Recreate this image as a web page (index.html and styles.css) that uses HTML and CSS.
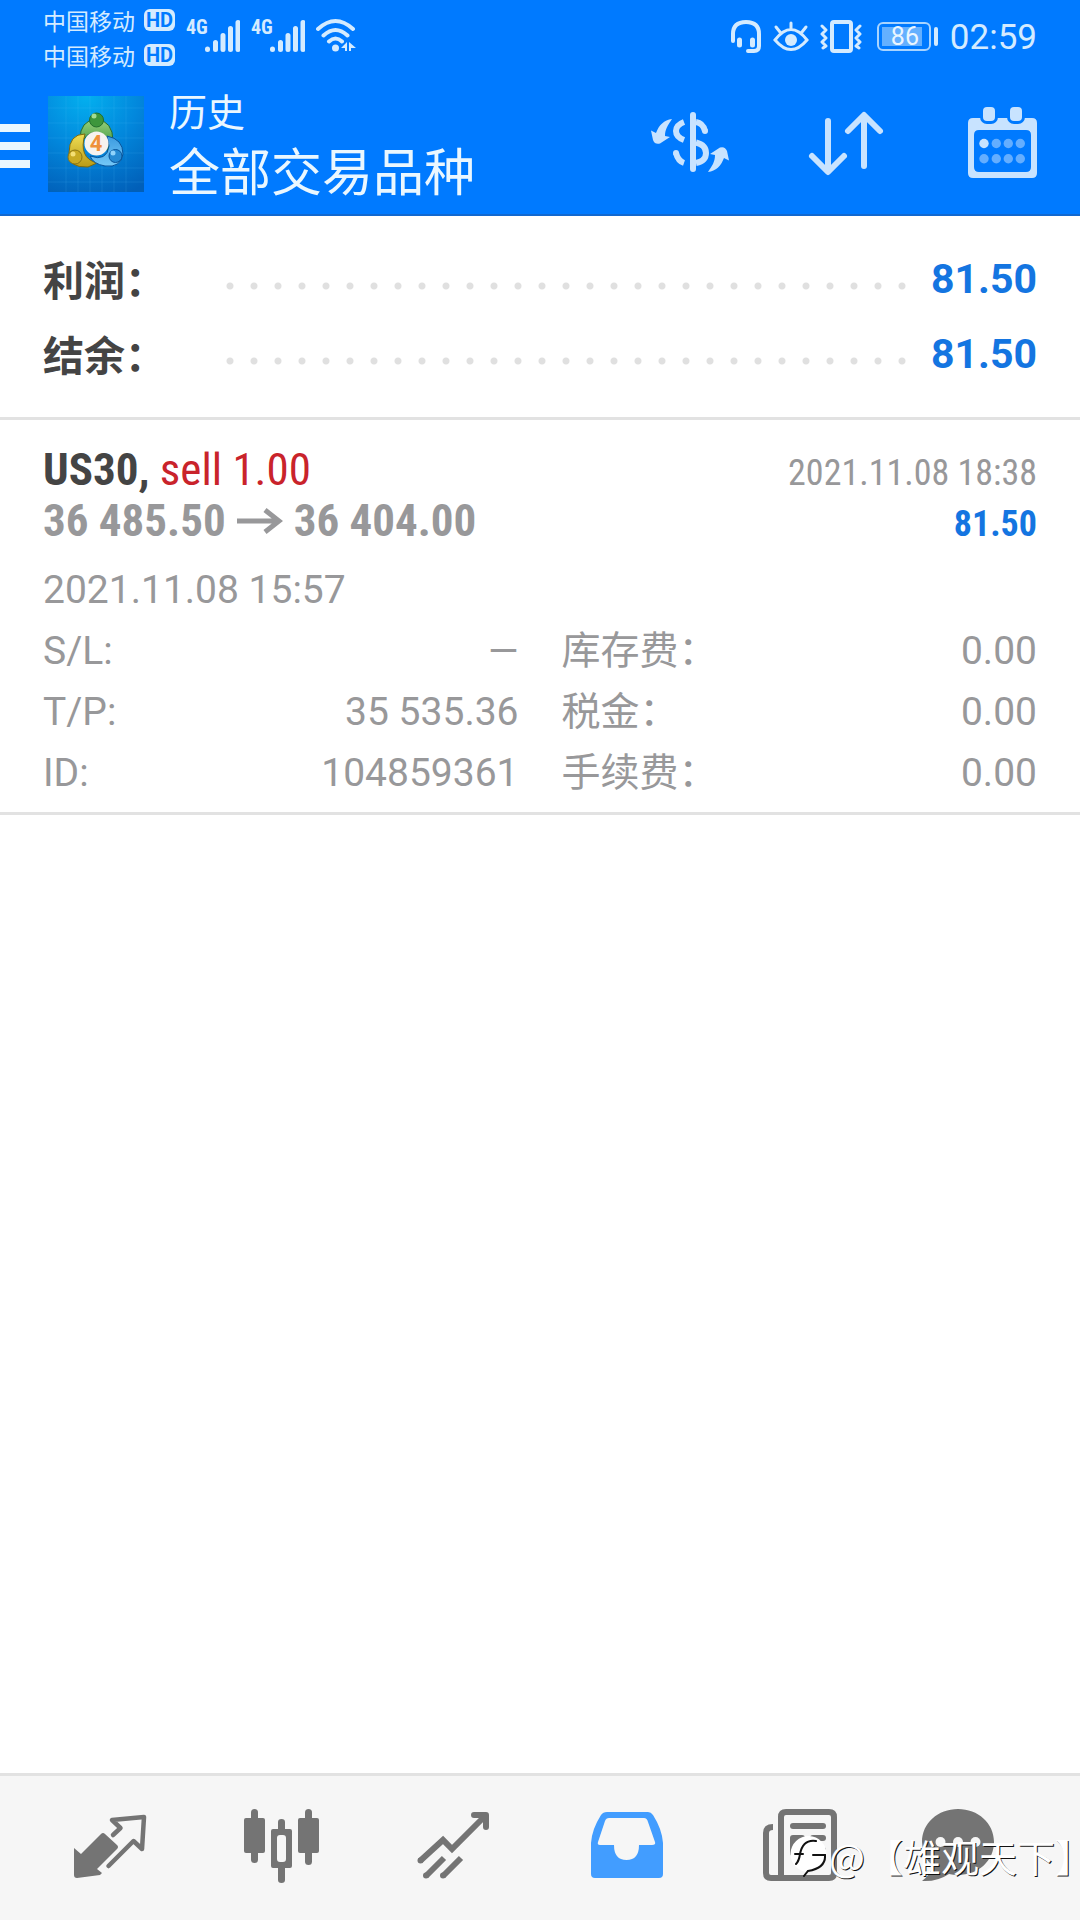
FILE: index.html
```html
<!DOCTYPE html>
<html lang="zh-CN">
<head>
<meta charset="utf-8">
<meta name="viewport" content="width=device-width, initial-scale=1">
<title>历史</title>
<link rel="stylesheet" href="styles.css">
</head>
<body>
<header class="top">
  <div class="status">
    <div class="carriers">
      <div class="carrier">中国移动<span class="hd">HD</span></div>
      <div class="carrier">中国移动<span class="hd">HD</span></div>
    </div>
    <div class="signals">
      <div class="signal"><span class="net">4G</span><svg width="36" height="36" viewBox="0 0 36 36" stroke="currentColor" stroke-width="5" stroke-linecap="round"><path d="M3.500 32.500v-.5M11.500 32.500v-7M19 32.500v-14M26.500 32.500v-21M34 32.500v-27"/></svg></div>
      <div class="signal"><span class="net">4G</span><svg width="36" height="36" viewBox="0 0 36 36" stroke="currentColor" stroke-width="5" stroke-linecap="round"><path d="M3.500 32.500v-.5M11.500 32.500v-7M19 32.500v-14M26.500 32.500v-21M34 32.500v-27"/></svg></div>
      <svg width="40" height="36" viewBox="0 0 40 36" fill="none" stroke="currentColor" stroke-width="4" stroke-linecap="round"><path d="M2 12Q19.500-4 37 12M7.500 18.500Q19.500 7.500 31.500 18.500M13 24.500Q19.500 18.500 26 24.500"/><circle cx="19.500" cy="31" r="3.500" fill="currentColor" stroke="none"/><path fill="currentColor" stroke="none" d="M31 25v9h-2v-3h-4zM33 25v9h2v-3h5z"/></svg>
    </div>
    <div class="indicators">
      <svg width="32" height="36" viewBox="0 0 32 36" fill="none" stroke="currentColor" stroke-width="4" stroke-linecap="round"><path d="M3 24V17Q3 5 16 5T29 17V29Q29 34 24 34H18"/><path stroke-width="5" d="M9.500 23v5M22.500 23v5"/></svg>
      <svg width="36" height="36" viewBox="0 0 36 36" fill="none" stroke="currentColor" stroke-width="3" stroke-linecap="round"><path d="M2 23Q18 2 34 23Q18 42 2 23ZM18 12V6M7 15L3 10M29 15l4-5"/><circle cx="18" cy="23" r="6" fill="currentColor" stroke="none"/></svg>
      <svg width="42" height="36" viewBox="0 0 42 36" fill="none" stroke="currentColor" stroke-width="4" stroke-linejoin="round" stroke-linecap="round"><rect x="12" y="5" width="19" height="29" rx="2"/><path stroke-width="3" d="M2 9l4 4-4 4 4 4-4 4 4 4-3 2M40 9l-4 4 4 4-4 4 4 4-4 4 3 2"/></svg>
      <span class="battery"><span class="level">86</span></span>
      <time class="clock">02:59</time>
    </div>
  </div>
  <div class="toolbar">
    <button class="menu" aria-label="菜单"><svg width="30" height="96" viewBox="0 0 30 96" fill="currentColor"><path d="M0 28h30v8H0zM0 46h30v8H0zM0 64h30v8H0z"/></svg></button>
    <svg class="logo" width="96" height="96" viewBox="0 0 96 96">
      <defs>
        <radialGradient id="bg" cx=".4" cy="0" r="1.100"><stop offset="0" stop-color="#03b0ef"/><stop offset=".5" stop-color="#0287dc"/><stop offset="1" stop-color="#015fb8"/></radialGradient>
        <linearGradient id="g" x1="0" y1="0" x2="0" y2="1"><stop offset="0" stop-color="#9ad27c"/><stop offset="1" stop-color="#2d8b35"/></linearGradient>
        <linearGradient id="y" x1="0" y1="0" x2="0" y2="1"><stop offset="0" stop-color="#f0de54"/><stop offset="1" stop-color="#b99a16"/></linearGradient>
        <linearGradient id="b" x1="0" y1="0" x2="0" y2="1"><stop offset="0" stop-color="#3b9be0"/><stop offset="1" stop-color="#75c8f7"/></linearGradient>
      </defs>
      <rect width="96" height="96" fill="url(#bg)"/>
      <path d="M18 0v96M30 0v96M42 0v96M54 0v96M66 0v96M78 0v96M0 12h96M0 27h96M0 42h96M0 57h96M0 72h96M0 86h96" stroke="#6cc8ff" stroke-opacity=".14"/>
      <g stroke-width="1">
        <path d="M32 43Q32 25 48 23Q65 25 65 45L60 56Q48 26 36 43Z" fill="url(#g)" stroke="#246b31"/>
        <path d="M37 38Q21 38 21 57Q20 72 40 71L49 67Q30 62 37 38Z" fill="url(#y)" stroke="#786910"/>
        <path d="M59 40Q75 43 75 58Q73 72 57 70Q45 68 42 60Q59 66 61 50Z" fill="url(#b)" stroke="#07539a"/>
        <circle cx="48.500" cy="24" r="7" fill="#3d963c" stroke="#226e2c"/>
        <circle cx="27" cy="61" r="7" fill="#c8aa23" stroke="#8a7514"/>
        <circle cx="67.500" cy="60" r="6.500" fill="#258ad3" stroke="#07539a"/>
      </g>
      <circle cx="46" cy="20" r="2.500" fill="#a4dc91"/><circle cx="25" cy="58" r="2.500" fill="#f4df75"/><circle cx="65" cy="57" r="2.500" fill="#8fd3fb"/>
      <circle cx="48.500" cy="47.500" r="12" fill="#f6f3ef"/>
      <text class="logo-num" x="48" y="55" text-anchor="middle">4</text>
    </svg>
    <div class="titles">
      <div class="section">历史</div>
      <h1 class="title">全部交易品种</h1>
    </div>
    <div class="actions">
      <button aria-label="货币"><svg width="96" height="96" viewBox="0 0 96 96" fill="none" stroke="currentColor" stroke-width="6"><path stroke-linecap="round" d="M51 19V73"/><path d="M42 26Q34 29 34 35T42 44M42 67Q36 65 34 57M54 26Q61 27 63 35M54 46.500Q64 49 64 57T54 67"/><g fill="currentColor" stroke="none"><circle cx="34" cy="57" r="3"/><circle cx="63" cy="35" r="3"/><path id="swap" d="M30 23C22 24 17 29 14 37L9 34.500L11 44Q13 49 18 47.500L28 41L23 40C23 33 26 29 30 23Z"/><use href="#swap" transform="rotate(180 48 49.500)"/></g></svg></button>
      <button aria-label="排序"><svg width="96" height="96" viewBox="0 0 96 96" fill="none" stroke="currentColor" stroke-width="6" stroke-linecap="round" stroke-linejoin="round"><path d="M30 25V75M14 60L30 76L46 60M66 70V20M50 35L66 19L82 35"/></svg></button>
      <button aria-label="日期"><svg width="96" height="96" viewBox="0 0 96 96" fill="currentColor"><path fill-rule="evenodd" d="M19 22H78Q83 22 83 27V77Q83 82 78 82H19Q14 82 14 77V27Q14 22 19 22ZM25 34Q20 34 20 39V71Q20 76 25 76H72Q77 76 77 71V39Q77 34 72 34Z"/><g stroke="#007aff" stroke-width="6" paint-order="stroke"><rect x="29" y="11" width="12" height="14" rx="4"/><rect x="56" y="11" width="12" height="14" rx="4"/></g><circle cx="30" cy="47.500" r="4.700"/><g opacity=".5"><circle cx="42.300" cy="47.500" r="4.700"/><circle cx="54.300" cy="47.500" r="4.700"/><circle cx="66.300" cy="47.500" r="4.700"/><circle cx="30" cy="62.700" r="4.700"/><circle cx="42.300" cy="62.700" r="4.700"/><circle cx="54.300" cy="62.700" r="4.700"/><circle cx="66.300" cy="62.700" r="4.700"/></g></svg></button>
    </div>
  </div>
</header>

<main class="content">
  <dl class="summary">
    <div class="sum-row"><dt>利润：</dt><dd>81.50</dd></div>
    <div class="sum-row"><dt>结余：</dt><dd>81.50</dd></div>
  </dl>
  <article class="deal">
    <div class="deal-row head">
      <div class="symbol"><b>US30,</b> <span class="sell">sell 1.00</span></div>
      <time class="closed">2021.11.08 18:38</time>
    </div>
    <div class="deal-row head prices">
      <div class="price">36 485.50 <svg width="46" height="28" viewBox="0 0 46 28" fill="none" stroke="currentColor" stroke-width="5"><path d="M0 14H43M28 3L42 14L28 25"/></svg> 36 404.00</div>
      <div class="profit">81.50</div>
    </div>
    <time class="opened">2021.11.08 15:57</time>
    <div class="details">
      <dl class="col">
        <div><dt>S/L:</dt><dd>—</dd></div>
        <div><dt>T/P:</dt><dd>35 535.36</dd></div>
        <div><dt>ID:</dt><dd>104859361</dd></div>
      </dl>
      <dl class="col">
        <div><dt>库存费：</dt><dd>0.00</dd></div>
        <div><dt>税金：</dt><dd>0.00</dd></div>
        <div><dt>手续费：</dt><dd>0.00</dd></div>
      </dl>
    </div>
  </article>
</main>

<nav class="tabs">
  <a href="#quotes" aria-label="行情"><svg width="96" height="96" viewBox="0 0 96 96"><path fill="currentColor" d="M12 48L19 54L39 34Q41 32 43 34L55 45Q57 47 55 49L35 69L40 73L38 75L15 78Q12 78 12 75Z"/><path fill="none" stroke="currentColor" stroke-width="4.500" stroke-linecap="round" stroke-linejoin="round" d="M51 35L58.500 28L50 20L82 17L80 49L71.500 41L46.500 66"/></svg></a>
  <a href="#charts" aria-label="图表"><svg width="96" height="96" viewBox="0 0 96 96" fill="currentColor"><rect x="10" y="18" width="21" height="35" rx="2"/><rect x="17" y="9" width="7" height="54" rx="3.500"/><path fill-rule="evenodd" d="M39 29H56Q58 29 58 31V66Q58 68 56 68H39Q37 68 37 66V31Q37 29 39 29ZM46 35Q43 35 43 38V59Q43 62 46 62H49Q52 62 52 59V38Q52 35 49 35Z"/><path d="M44 29V22Q44 19 47.500 19T51 22V29ZM44 68V80Q44 83 47.500 83T51 80V68Z"/><rect x="64" y="18" width="21" height="35" rx="2"/><rect x="71" y="9" width="7" height="56" rx="3.500"/></svg></a>
  <a href="#trade" aria-label="交易"><svg width="96" height="96" viewBox="0 0 96 96" fill="none" stroke="currentColor" stroke-width="6"><path d="M14 61L37 40L46 49L80 15M20 76L38 58M37 76L55 58"/><path stroke-linejoin="round" stroke-linecap="round" d="M68 15H80V27"/><g fill="currentColor" stroke="none"><circle cx="14.500" cy="60.500" r="3"/><circle cx="20" cy="75.500" r="3"/><circle cx="37" cy="75.500" r="3"/></g></svg></a>
  <a href="#history" class="active" aria-label="历史" aria-current="page"><svg width="96" height="96" viewBox="0 0 96 96" fill="currentColor"><path fill-rule="evenodd" d="M29 12H70Q73 12 75 15Q84 29 85 43V74Q85 78 81 78H17Q13 78 13 74V43Q14 29 23 15Q25 12 29 12ZM31 18Q28 18 27 21L20 42Q19 45 22 45H36Q36 60 48.500 60T61 45H74Q78 45 77 42L70 22Q69 18 66 18Z"/></svg></a>
  <a href="#news" aria-label="新闻"><svg width="96" height="96" viewBox="0 0 96 96"><path fill="none" stroke="currentColor" stroke-width="6" d="M23 27Q16 27 16 33V73Q16 78 21 78H79Q84 78 84 73V17Q84 12 79 12H36Q31 12 31 17V78"/><g fill="currentColor"><rect x="40" y="23" width="36" height="6" rx="3"/><rect x="40" y="35" width="15" height="21" rx="3"/><rect x="60" y="35" width="16" height="6" rx="3"/><rect x="60" y="47" width="16" height="6" rx="3"/></g></svg></a>
  <a href="#mail" aria-label="信箱"><svg width="96" height="96" viewBox="0 0 96 96"><path fill="currentColor" d="M36 9C56 9 72 23 72 42S56 75 36 75Q31 75 27 74Q15 82 0 81Q8 75 11 66Q0 57 0 42C0 23 16 9 36 9Z"/><g fill="#f6f6f6"><circle cx="18.500" cy="42" r="5"/><circle cx="36" cy="42" r="5"/><circle cx="53.500" cy="42" r="5"/></g></svg></a>
  <div class="watermark"><svg width="40" height="42" viewBox="0 0 40 42"><path fill="#fff" d="M20 1A18 18 0 1 1 19 37A18 18 0 1 1 20 1Z"/><path fill="none" stroke="#111" stroke-width="2" stroke-linecap="round" d="M7 29Q10 26 11 19Q14 4 27 6M6 19H14M24 20H36Q37 33 19 36L15 41"/></svg><span>@【雄观天下<span class="half">】</span></span></div>
</nav>
</body>
</html>
```
FILE: styles.css
```css
* { box-sizing: border-box; }
body {
  margin: 0;
  min-height: 100vh;
  display: flex;
  flex-direction: column;
  background: #fff;
  font-family: Roboto, "Noto Sans CJK SC", sans-serif;
  color: #444;
}
svg { display: block; flex: none; }
dl, dd, h1 { margin: 0; }
button { padding: 0; border: 0; background: none; color: inherit; font: inherit; }

/* Header */
.top { background: #007aff; color: #d4ebff; border-bottom: 2px solid #1268cf; }
.status { display: flex; height: 80px; padding: 2px 43px 0; }
.carrier { display: flex; align-items: center; gap: 9px; height: 35px; font-size: 23px; }
.hd {
  width: 31px; height: 22px; border-radius: 6px;
  background: #d4ebff; color: #007aff;
  font-size: 20px; font-weight: 700; line-height: 22px; text-align: center;
}
.signals { display: flex; gap: 11px; margin-left: 11px; padding-top: 15px; }
.signal { display: flex; }
.net { width: 18px; font: 700 20px/20px "Roboto Condensed", sans-serif; }
.indicators { display: flex; gap: 11px; margin-left: auto; padding-top: 15px; }
.battery {
  position: relative;
  width: 54px; height: 29px; margin: 5px 8px 0 4px; padding: 3px;
  border: 2px solid #a8d4ff; border-radius: 6px;
}
.battery::after {
  content: ""; position: absolute; right: -9px; top: 3px;
  width: 4px; height: 19px; border-radius: 2px; background: #d4ebff;
}
.level {
  display: block; width: 40px; height: 19px; padding-left: 9px;
  background: #64b0ff; font-size: 25px; line-height: 20px; color: #eaf6ff;
}
.clock { font-size: 35px; line-height: 42px; }

.toolbar { display: flex; align-items: flex-start; padding: 16px 30px 22px 0; color: #eaf7ff; }
.menu { margin-right: 18px; }
.logo-num { font: 700 22px Roboto, sans-serif; fill: #ef9139; }
.titles { margin: -6px 0 -22px 25px; }
.section { font-size: 38px; line-height: 46px; }
.title { font-size: 51px; line-height: 76px; font-weight: 400; }
.actions { display: flex; gap: 60px; margin-left: auto; color: #c8e3ff; }

/* Totals */
.content { flex: 1; }
.summary { padding: 24px 43px 27px; border-bottom: 3px solid #e2e2e2; }
.sum-row { display: flex; align-items: center; height: 75px; font-size: 41px; font-weight: 700; }
.sum-row dt { width: 175px; }
.sum-row dd { flex: 1; display: flex; align-items: center; padding-top: 3px; color: #1475e1; }
.sum-row dd::before {
  content: ""; flex: 1; height: 8px; margin: 14px 17px 0 0;
  background: radial-gradient(circle, #e0e0e0 3px, transparent 4px) 0 0 / 24px 8px;
}

/* Deal */
.deal { padding: 24px 43px 8px; border-bottom: 3px solid #e2e2e2; color: #98989a; font-size: 39px; }
.deal-row { display: flex; justify-content: space-between; align-items: baseline; height: 51px; line-height: 51px; }
.head { font-family: "Roboto Condensed", sans-serif; }
.symbol, .price { font-size: 45px; }
.symbol b { color: #444; }
.sell { color: #c9232b; }
.price, .profit { font-weight: 700; }
.price { display: flex; align-items: center; gap: 11px; }
.closed, .profit { font-size: 36px; }
.profit { color: #1475e1; }
.opened { display: block; margin-top: 14px; line-height: 61px; }
.details { display: grid; grid-template-columns: 1fr 1fr; gap: 43px; }
.col div { display: flex; justify-content: space-between; height: 61px; line-height: 61px; }
.col dt { white-space: nowrap; }

/* Bottom tabs */
.tabs {
  position: relative; overflow: hidden;
  display: grid; grid-template-columns: repeat(6, 1fr);
  padding: 24px; background: #f6f6f6; border-top: 3px solid #e2e2e2; color: #747474;
}
.tabs a { display: flex; justify-content: center; color: inherit; }
.tabs .active { color: #429dff; }
.watermark {
  position: absolute; right: 6px; top: 58px;
  display: flex; align-items: center;
  font: 400 38px/44px "Noto Sans CJK SC", sans-serif; color: #fff;
  white-space: nowrap; text-shadow: 1px 1px 0 #111;
}
.half { font-feature-settings: "halt"; }
```
